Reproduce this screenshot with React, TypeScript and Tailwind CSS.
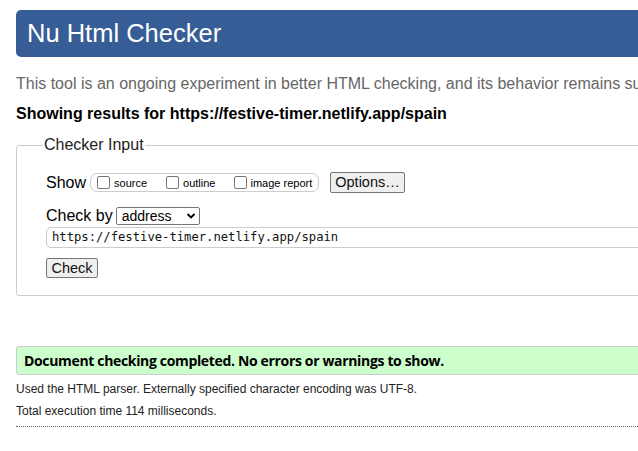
import React from "react";

const arial = { fontFamily: '"Liberation Sans", Arial, sans-serif' };

export default function App() {
  return (
    <div className="w-[638px] h-[451px] overflow-hidden bg-white text-black" style={arial}>
      <div className="w-[760px] pl-[16px] pt-[10px]">
        <h1 className="h-[47px] bg-[#365d95] rounded-l-[5px] text-white text-[25.5px] leading-[47px] pl-[11px] font-normal">
          Nu Html Checker
        </h1>
        <p className="mt-[18px] text-[16px] leading-[18px] text-[#666] whitespace-nowrap">
          This tool is an ongoing experiment in better HTML checking, and its behavior remains subject to change
        </p>
        <p className="mt-[12px] text-[16px] leading-[18px] font-bold whitespace-nowrap">
          Showing results for https://festive-timer.netlify.app/spain
        </p>
        <fieldset className="mt-[13px] border border-[#ccc] rounded-[3px] pl-[29px] pr-[29px] pb-[17px] pt-[0px]">
          <legend className="-ml-[3px] px-[1px] text-[16px] leading-[18px] text-[#222]">Checker Input</legend>
          <div className="flex items-center h-[21px] mt-[18px]">
            <span className="text-[16px] mr-[4px]">Show</span>
            <div className="flex items-center h-[19px] border border-[#ccc] rounded-[7px] pl-[6px] w-[229px]">
              <span className="w-[13px] h-[13px] border border-[#767676] rounded-[2px] bg-white" />
              <span className="text-[11px] ml-[4px] mt-[2px]">source</span>
              <span className="w-[13px] h-[13px] border border-[#767676] rounded-[2px] bg-white ml-[19px]" />
              <span className="text-[11px] ml-[4px] mt-[2px]">outline</span>
              <span className="w-[13px] h-[13px] border border-[#767676] rounded-[2px] bg-white ml-[19px]" />
              <span className="text-[11px] ml-[3px] mt-[2px]">image report</span>
            </div>
            <button className="ml-[11px] h-[21px] w-[75px] bg-[#efefef] border border-[#767676] rounded-[2px] text-[14.5px] leading-[19px] text-[#111]">
              Options…
            </button>
          </div>
          <div className="flex items-center h-[22px] mt-[12px]">
            <span className="text-[16px] mr-[3px]">Check by</span>
            <div className="relative h-[18px] w-[84px] border border-[#767676] rounded-[2px] bg-white">
              <span className="absolute left-[5px] top-[-1px] text-[14px] leading-[18px]">address</span>
              <svg className="absolute right-[3px] top-[4px]" width="10" height="8" viewBox="0 0 10 8">
                <path d="M1.5 2 L5 5.5 L8.5 2" stroke="#000" strokeWidth="1.8" fill="none" />
              </svg>
            </div>
          </div>
          <div className="mt-0 h-[21px] border border-[#ccc] rounded-[5px] flex items-center pl-[5px] mr-[-40px]">
            <span className="text-[12.2px] text-[#111]" style={{ fontFamily: '"DejaVu Sans Mono", monospace' }}>
              https://festive-timer.netlify.app/spain
            </span>
          </div>
          <button className="mt-[10px] h-[20px] w-[52px] bg-[#efefef] border border-[#767676] rounded-[2px] text-[14.5px] leading-[18px] text-[#111] block">
            Check
          </button>
        </fieldset>
        <div className="mt-[50px] h-[29px] bg-[#ccffcc] border border-[#ccc] rounded-l-[3px] flex items-center pl-[7px]">
          <span className="text-[14px] font-bold text-black whitespace-nowrap tracking-[-0.34px]" style={{ fontFamily: '"Open Sans", "Segoe UI", sans-serif' }}>
            Document checking completed. No errors or warnings to show.
          </span>
        </div>
        <p className="mt-[7px] text-[12px] leading-[14px] text-[#222] whitespace-nowrap">
          Used the HTML parser. Externally specified character encoding was UTF-8.
        </p>
        <p className="mt-[8px] text-[12px] leading-[14px] text-[#222] whitespace-nowrap">
          Total execution time 114 milliseconds.
        </p>
        <div className="mt-[8px] border-t border-dotted border-[#666]" />
      </div>
    </div>
  );
}
